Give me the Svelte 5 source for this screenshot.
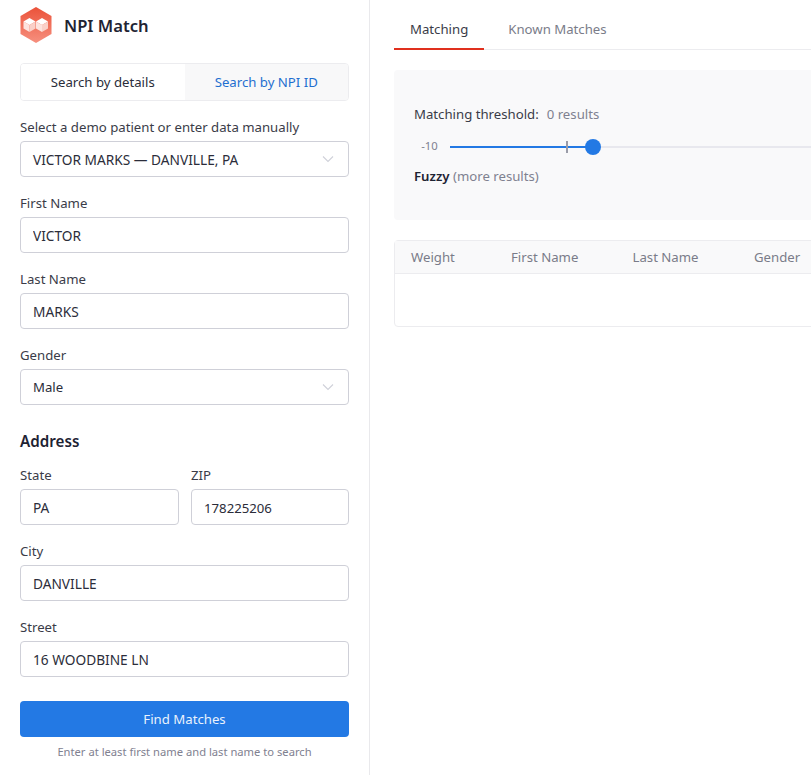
<script>
  let threshold = $state(-10);
  const cols = ['Weight', 'First Name', 'Last Name', 'Gender'];
</script>

<div class="page">
  <aside>
    <div class="brand">
      <svg class="logo" width="32" height="36" viewBox="0 0 32 36">
        <defs>
          <linearGradient id="hex" x1="0" y1="0" x2="0" y2="1">
            <stop offset="0" stop-color="#eb5239" />
            <stop offset="1" stop-color="#f6907f" />
          </linearGradient>
        </defs>
        <path d="M16 0 L31.5 9 V27 L16 36 L.5 27 V9 Z" fill="url(#hex)" />
        <path d="M9.5 11 L15.5 14.5 L9.5 18 L3.5 14.5 Z" fill="#fff" />
        <path d="M3.5 14.5 L9.5 18 V25 L3.5 21.5 Z" fill="#fde3de" />
        <path d="M9.5 18 L15.5 14.5 V21.5 L9.5 25 Z" fill="#fad0c8" />
        <path d="M22 11 L28 14.5 L22 18 L16 14.5 Z" fill="#fff" />
        <path d="M16 14.5 L22 18 V25 L16 21.5 Z" fill="#fde3de" />
        <path d="M22 18 L28 14.5 V21.5 L22 25 Z" fill="#fad0c8" />
      </svg>
      <span class="brand-name">NPI Match</span>
    </div>

    <div class="segment">
      <button class="seg active">Search by details</button>
      <button class="seg other">Search by NPI ID</button>
    </div>

    <form onsubmit={(e) => e.preventDefault()}>
      <div class="field">
        <label for="demo">Select a demo patient or enter data manually</label>
        <div class="select" id="demo">
          <span class="caps">VICTOR MARKS — DANVILLE, PA</span>
          <svg width="12" height="12" viewBox="0 0 12 12"><path d="M1 3.5 L6 8.5 L11 3.5" fill="none" stroke="#cfd1d9" stroke-width="1.1" /></svg>
        </div>
      </div>
      <div class="field">
        <label for="first">First Name</label>
        <input class="caps" id="first" value="VICTOR" />
      </div>
      <div class="field">
        <label for="last">Last Name</label>
        <input class="caps" id="last" value="MARKS" />
      </div>
      <div class="field">
        <label for="gender">Gender</label>
        <div class="select" id="gender">
          <span>Male</span>
          <svg width="12" height="12" viewBox="0 0 12 12"><path d="M1 3.5 L6 8.5 L11 3.5" fill="none" stroke="#cfd1d9" stroke-width="1.1" /></svg>
        </div>
      </div>

      <h3>Address</h3>

      <div class="two">
        <div class="field">
          <label for="state">State</label>
          <input class="caps" id="state" value="PA" />
        </div>
        <div class="field">
          <label for="zip">ZIP</label>
          <input id="zip" value="178225206" />
        </div>
      </div>
      <div class="field">
        <label for="city">City</label>
        <input class="caps" id="city" value="DANVILLE" />
      </div>
      <div class="field">
        <label for="street">Street</label>
        <input class="caps" id="street" value="16 WOODBINE LN" />
      </div>

      <button class="submit" type="submit">Find Matches</button>
      <p class="hint">Enter at least first name and last name to search</p>
    </form>
  </aside>

  <main>
    <nav class="tabs">
      <button class="tab current">Matching</button>
      <button class="tab">Known Matches</button>
    </nav>

    <section class="panel">
      <div class="thresh-title">
        <span>Matching threshold:</span>
        <span class="muted">0 results</span>
      </div>
      <div class="slider">
        <span class="min">{threshold}</span>
        <div class="rail">
          <div class="fill"></div>
          <div class="mark"></div>
          <div class="thumb"></div>
        </div>
      </div>
      <p class="fuzzy"><b>Fuzzy</b> <span class="muted">(more results)</span></p>
    </section>

    <div class="table-wrap">
      <table>
        <thead>
          <tr>
            {#each cols as c}
              <th>{c}</th>
            {/each}
          </tr>
        </thead>
      </table>
      <div class="empty"></div>
    </div>
  </main>
</div>

<style>
  :global(body) {
    margin: 0;
    background: #fff;
    overflow: hidden;
  }

  .page {
    display: flex;
    width: 811px;
    height: 775px;
    overflow: hidden;
    font-family: "Noto Sans", "Open Sans", sans-serif;
    font-size: 13.2px;
    color: #2b2d3a;
  }

  aside {
    flex: 0 0 370px;
    box-sizing: border-box;
    padding: 7px 20px 0;
    border-right: 1px solid #e9e9ec;
  }

  .brand {
    display: flex;
    align-items: center;
    gap: 12px;
    height: 36px;
  }

  .brand-name {
    font-size: 16.6px;
    font-weight: 600;
    color: #1e2333;
  }

  .segment {
    display: flex;
    height: 38px;
    margin-top: 20px;
    box-sizing: border-box;
    border: 1px solid #ececef;
    border-radius: 4px;
    overflow: hidden;
  }

  .seg {
    flex: 1;
    border: 0;
    background: #fff;
    font: inherit;
    color: #2b2d3a;
    padding: 0 0 1px;
  }

  .seg.other {
    background: #f8f8f9;
    color: #1f6fd0;
  }

  form {
    display: flex;
    flex-direction: column;
    gap: 16px;
    margin-top: 16px;
  }

  .field {
    display: flex;
    flex-direction: column;
    gap: 4px;
    min-width: 0;
  }

  label {
    line-height: 20px;
    color: #3a3c48;
  }

  input,
  .select {
    box-sizing: border-box;
    width: 100%;
    height: 36px;
    padding: 0 12px;
    border: 1px solid #cfd0d8;
    border-radius: 4px;
    background: #fff;
    font: inherit;
    color: #2b2d3a;
    outline: none;
  }

  input {
    padding-top: 1px;
  }

  .caps {
    font-size: 13.7px;
  }

  .select {
    display: flex;
    align-items: center;
    justify-content: space-between;
    padding-right: 14px;
  }

  h3 {
    margin: 8px 0 -4px;
    font-size: 15.2px;
    line-height: 24px;
    font-weight: 600;
    color: #1e2333;
  }

  .two {
    display: grid;
    grid-template-columns: 159px 158px;
    gap: 12px;
  }

  .submit {
    height: 36px;
    margin-top: 8px;
    border: 0;
    border-radius: 4px;
    background: #2379e4;
    color: #e9f2fd;
    font: inherit;
  }

  .hint {
    margin: -9px 0 0;
    text-align: center;
    font-size: 11.2px;
    line-height: 16px;
    color: #7f8190;
  }

  main {
    flex: 1;
    min-width: 0;
    padding: 0 0 0 24px;
    margin-right: -40px;
  }

  .tabs {
    display: flex;
    height: 50px;
    box-sizing: border-box;
    border-bottom: 1px solid #ececef;
  }

  .tab {
    height: 49px;
    padding: 8px 16px 0;
    margin-right: 8px;
    border: 0;
    background: none;
    font: inherit;
    color: #7a7c89;
  }

  .tab.current {
    color: #3a3c48;
    box-shadow: inset 0 -2px 0 #e0301e;
    height: 50px;
  }

  .panel {
    height: 150px;
    margin-top: 20px;
    box-sizing: border-box;
    padding: 35px 20px 0;
    background: #f9f9fa;
    border-radius: 4px;
  }

  .thresh-title {
    display: flex;
    gap: 8px;
    line-height: 19px;
    color: #3a3c48;
  }

  .muted {
    color: #7f8190;
  }

  .slider {
    display: flex;
    align-items: center;
    height: 20px;
    margin-top: 13px;
  }

  .min {
    flex: 0 0 36px;
    box-sizing: border-box;
    font-size: 11.3px;
    line-height: 18px;
    padding: 0 5px 2px 0;
    text-align: center;
    color: #7f8190;
  }

  .rail {
    position: relative;
    flex: 1;
    height: 2px;
    background: #e8e8ee;
  }

  .fill {
    width: 143px;
    height: 2px;
    background: #2379e4;
  }

  .mark {
    position: absolute;
    left: 116px;
    top: -5px;
    width: 2px;
    height: 12px;
    background: #9a9ca8;
  }

  .thumb {
    position: absolute;
    left: 135px;
    top: -7px;
    width: 16px;
    height: 16px;
    border-radius: 50%;
    background: #2379e4;
  }

  .fuzzy {
    margin: 10px 0 0;
    line-height: 19px;
  }

  .fuzzy b {
    font-weight: 600;
    color: #1e2333;
  }

  .table-wrap {
    margin-top: 20px;
    border: 1px solid #ececef;
    border-radius: 4px;
  }

  table {
    border-collapse: collapse;
    table-layout: fixed;
    width: 100%;
  }

  thead {
    background: #f9f9fa;
  }

  th {
    width: 121.5px;
    height: 32px;
    padding: 0 16px;
    box-sizing: border-box;
    border-bottom: 1px solid #ececef;
    text-align: left;
    font-weight: 400;
    color: #7a7c89;
    white-space: nowrap;
  }

  th:first-child {
    width: 100px;
  }

  .empty {
    height: 52px;
  }
</style>
